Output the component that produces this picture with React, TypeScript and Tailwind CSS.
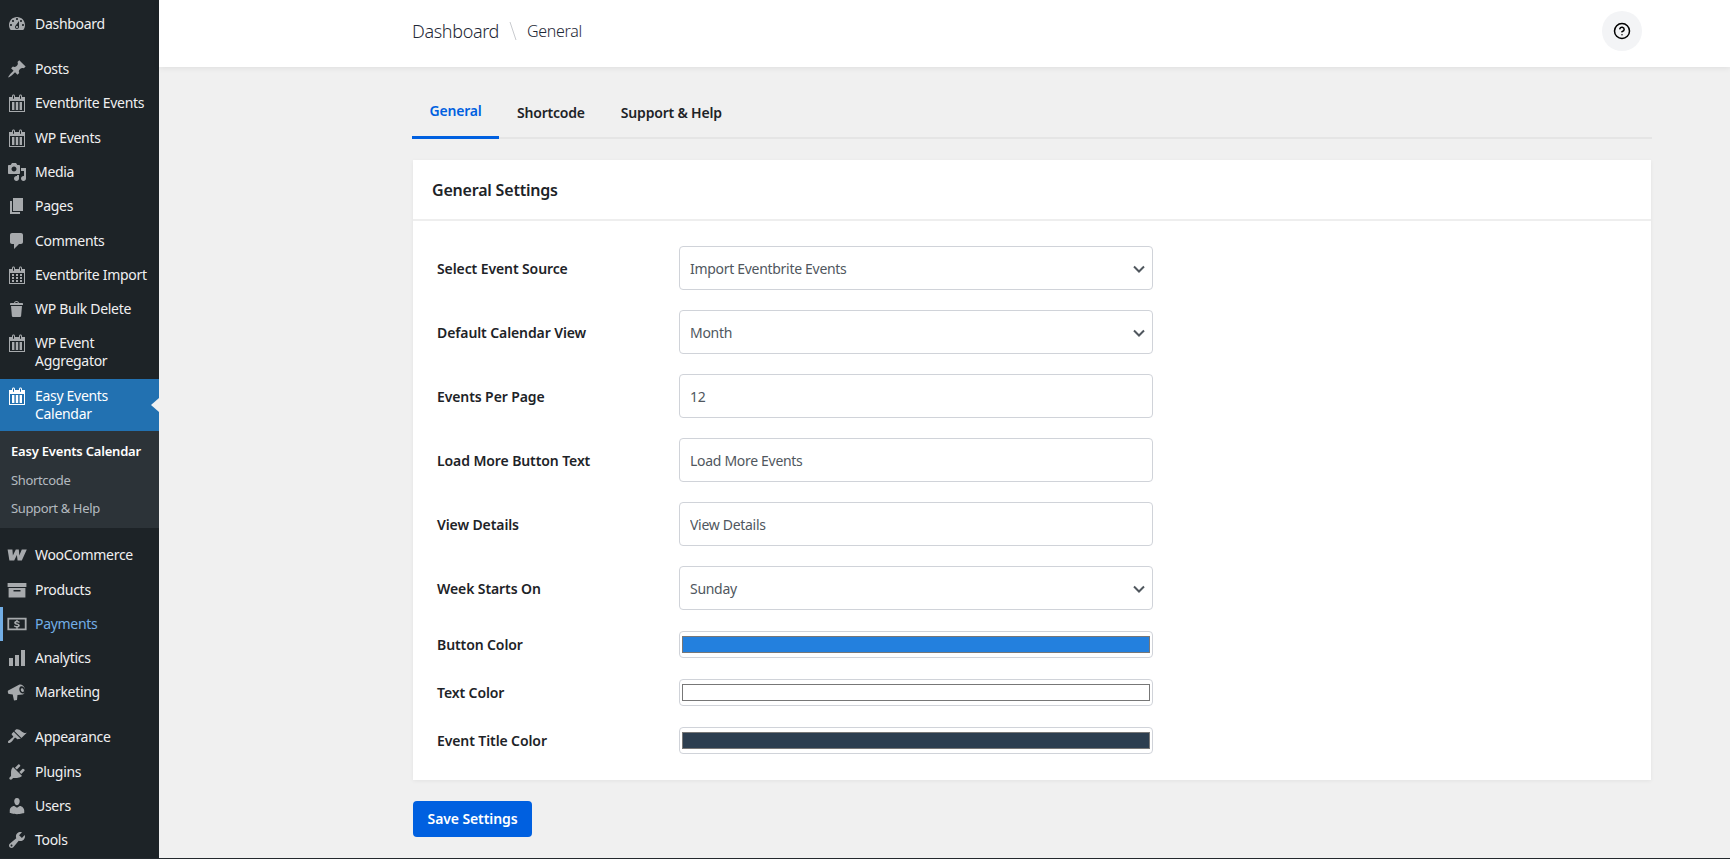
import React from "react";
import { CircleHelp } from "lucide-react";

const calTop =
  "M15 4h3v15H2V4h3V3c0-.41.15-.76.44-1.06.29-.29.65-.44 1.06-.44s.77.15 1.06.44c.29.3.44.65.44 1.06v1h4V3c0-.41.15-.76.44-1.06.29-.29.65-.44 1.06-.44s.77.15 1.06.44c.29.3.44.65.44 1.06v1zM6 3v2.5c0 .14.05.26.15.36.09.09.21.14.35.14s.26-.05.35-.14c.1-.1.15-.22.15-.36V3c0-.14-.05-.26-.15-.35-.09-.1-.21-.15-.35-.15s-.26.05-.35.15c-.1.09-.15.21-.15.35zm7 0v2.5c0 .14.05.26.14.36.1.09.22.14.36.14s.26-.05.36-.14c.09-.1.14-.22.14-.36V3c0-.14-.05-.26-.14-.35-.1-.1-.22-.15-.36-.15s-.26.05-.36.15c-.09.09-.14.21-.14.35zm4 15V8H3v10h14z";

const icons: Record<string, string> = {
  dashboard:
    "M3.76 16h12.48c1.1-1.37 1.76-3.11 1.76-5 0-4.42-3.58-8-8-8s-8 3.58-8 8c0 1.89.66 3.63 1.76 5zM10 4c.55 0 1 .45 1 1s-.45 1-1 1-1-.45-1-1 .45-1 1-1zM6 6c.55 0 1 .45 1 1s-.45 1-1 1-1-.45-1-1 .45-1 1-1zm8 0c.55 0 1 .45 1 1s-.45 1-1 1-1-.45-1-1 .45-1 1-1zm-5.37 5.55L12 7v6c0 1.1-.9 2-2 2s-2-.9-2-2c0-.57.24-1.08.63-1.45zM4 10c.55 0 1 .45 1 1s-.45 1-1 1-1-.45-1-1 .45-1 1-1zm12 0c.55 0 1 .45 1 1s-.45 1-1 1-1-.45-1-1 .45-1 1-1zm-5 3c0-.55-.45-1-1-1s-1 .45-1 1 .45 1 1 1 1-.45 1-1z",
  pin: "M10.44 3.02l1.82-1.82 6.36 6.35-1.83 1.82c-1.05-.68-2.48-.57-3.41.36l-.75.75c-.92.93-1.04 2.35-.35 3.41l-1.83 1.82-2.41-2.41-2.8 2.79c-.42.42-3.38 2.71-3.8 2.29s1.86-3.39 2.28-3.81l2.79-2.79L4.1 9.36l1.83-1.82c1.05.69 2.48.57 3.4-.36l.75-.75c.93-.92 1.05-2.35.36-3.41z",
  calendar: calTop + "M5 9h2.400v8H5zm3.800 0h2.400v8H8.800zm3.800 0H15v8h-2.400z",
  calendarGrid:
    calTop +
    "M7 9v2H5V9h2zm2 0h2v2H9V9zm4 2V9h2v2h-2zm-6 1v2H5v-2h2zm2 0h2v2H9v-2zm4 2v-2h2v2h-2zm-6 1v2H5v-2h2zm4 2H9v-2h2v2zm4 0h-2v-2h2v2z",
  media:
    "M13 11V4c0-.55-.45-1-1-1h-1.67L9 1H5L3.67 3H2c-.55 0-1 .45-1 1v7c0 .55.45 1 1 1h10c.55 0 1-.45 1-1zM7 4.5c1.38 0 2.5 1.12 2.5 2.5S8.38 9.5 7 9.5 4.5 8.38 4.5 7 5.62 4.5 7 4.5zM14 6h5v10.5c0 1.38-1.12 2.5-2.5 2.5S14 17.88 14 16.5s1.12-2.5 2.5-2.5c.17 0 .34.02.5.05V9h-3V6zm-4 8.05V13h2v3.5c0 1.38-1.12 2.5-2.5 2.5S7 17.88 7 16.5 8.12 14 9.5 14c.17 0 .34.02.5.05z",
  page: "M6 15V2h10v13H6zm-1 1h8v2H3V5h2v11z",
  comments: "M5 2h9c1.1 0 2 .9 2 2v7c0 1.1-.9 2-2 2h-2l-5 5v-5H5c-1.1 0-2-.9-2-2V4c0-1.1.9-2 2-2z",
  trash:
    "M12 4h3c.6 0 1 .4 1 1v1H3V5c0-.6.5-1 1-1h3c.2-1.1 1.3-2 2.5-2s2.3.9 2.5 2zM8 4h3c-.2-.6-.9-1-1.5-1S8.2 3.4 8 4zM4 7h11l-.9 10.1c0 .5-.5.9-1 .9H5.9c-.5 0-.9-.4-1-.9L4 7z",
  woo: "M.6 4.400h4.800l.5 6.200 2.900-6.200h3l.5 6.200 2.500-6.200h5l-5 11h-4.200l-.7-5.400-2.700 5.400H2.400z",
  archive: "M19.400 3v4H.6V3h18.800zM1.600 8h16.800v9.400H1.600V8zm4.900 2v1.400h7V10h-7z",
  payments:
    "M.4 3.800h19.200v12.400H.4V3.800zm1.800 1.800v8.800h15.600V5.600H2.200zM9.300 6h1.400v1c.9.1 1.600.4 2.100.9l-.7 1.100c-.5-.4-1.200-.8-2-.8-.8 0-1.100.3-1.100.6 0 .4.5.5 1.300.7 1.400.3 2.500.8 2.500 2 0 1-.8 1.700-2.100 1.900v1H9.300v-1c-1.100-.1-1.900-.5-2.500-1.100l.8-1.100c.6.5 1.400.9 2.300.9.8 0 1.100-.2 1.100-.6s-.4-.6-1.400-.8c-1.400-.3-2.400-.8-2.400-2 0-1 .8-1.700 2.100-1.900v-.8z",
  analytics: "M18 18V2h-4v16h4zm-6 0V7H8v11h4zm-6 0v-8H2v8h4z",
  marketing:
    "M1.200 8.400L12 2.800c2-1 4.600.4 5.600 3.200 1 2.900.1 5.800-1.900 6.500L10.500 13 10 18 7 18.600 5.700 12.400 2.300 12.100c-1.200-.1-2-3.100-1.100-3.700zM14 4.300c-1.500.5-2.100 2.400-1.500 4.400.7 2 2.400 3.200 3.900 2.700 1.500-.5 2.100-2.400 1.400-4.400-.6-2-2.300-3.200-3.800-2.700zM14.700 6.300c.8-.3 1.700.4 2 1.400.4 1 .1 2-.7 2.300-.8.3-1.700-.4-2-1.400-.4-1-.1-2 .7-2.300z",
  brush:
    "M14.480 11.060L7.410 3.990l1.500-1.500c.5-.56 2.300-.47 3.510.32 1.210.8 1.430 1.280 2.910 2.100 1.180.64 2.450 1.260 4.450.85zm-.71.71L6.700 4.700 4.930 6.470c-.39.39-.39 1.020 0 1.410l1.060 1.060c.39.39.39 1.030 0 1.420-.6.6-1.430 1.110-2.210 1.690-.35.26-.7.53-1.010.84C1.430 13.230.4 14.930 1.200 15.730c.8.79 2.500-.24 3.840-1.570.31-.31.58-.66.84-1.020.58-.78 1.090-1.610 1.690-2.210.39-.39 1.020-.39 1.410 0l1.060 1.060c.39.39 1.020.39 1.410 0z",
  plugin:
    "M13.110 4.360L9.870 7.600 8 5.730l3.240-3.240c.35-.34 1.050-.2 1.560.32.52.51.66 1.210.31 1.550zm-8 1.770l.91-1.120 9.010 9.010-1.190.84c-.71.71-2.630 1.160-3.820 1.160H6.140L4.900 17.260c-.59.59-1.540.59-2.120 0-.59-.58-.59-1.530 0-2.120l1.240-1.240v-3.880c0-1.130.4-3.190 1.090-3.890zm7.260 3.970l3.240-3.240c.34-.35 1.040-.21 1.550.31.52.51.66 1.210.31 1.550l-3.240 3.250z",
  users:
    "M10 9.250c-2.270 0-2.730-3.440-2.730-3.440C7 4.020 7.820 2 9.970 2c2.160 0 2.980 2.020 2.710 3.810 0 0-.41 3.440-2.680 3.440zm0 2.570L12.720 10c2.390 0 4.520 2.330 4.520 4.530v2.490s-3.650 1.130-7.240 1.130c-3.650 0-7.240-1.130-7.240-1.130v-2.490c0-2.250 1.940-4.480 4.470-4.480z",
  tools:
    "M16.680 9.770c-1.340 1.340-3.300 1.670-4.950.99l-5.410 6.520c-.99.99-2.590.99-3.580 0s-.99-2.590 0-3.570l6.520-5.420c-.68-1.650-.35-3.610.99-4.950 1.280-1.280 3.120-1.620 4.720-1.060l-2.890 2.890 2.820 2.820 2.860-2.870c.53 1.580.18 3.390-1.080 4.650zM3.810 16.210c.4.39 1.040.39 1.430 0 .4-.4.4-1.040 0-1.430-.39-.4-1.030-.4-1.430 0-.39.39-.39 1.030 0 1.430z",
};

function MenuIcon({ name, className }: { name: string; className?: string }) {
  return (
    <svg viewBox="0 0 20 20" className={`-my-px h-5 w-5 shrink-0 fill-current ${className ?? ""}`}>
      <path fillRule="evenodd" d={icons[name]} />
    </svg>
  );
}

type Item = { label: string; icon: string; gap?: boolean };

const topItems: Item[] = [
  { label: "Dashboard", icon: "dashboard" },
  { label: "Posts", icon: "pin", gap: true },
  { label: "Eventbrite Events", icon: "calendar" },
  { label: "WP Events", icon: "calendar" },
  { label: "Media", icon: "media" },
  { label: "Pages", icon: "page" },
  { label: "Comments", icon: "comments" },
  { label: "Eventbrite Import", icon: "calendarGrid" },
  { label: "WP Bulk Delete", icon: "trash" },
  { label: "WP Event Aggregator", icon: "calendar" },
];

const bottomItems: Item[] = [
  { label: "WooCommerce", icon: "woo", gap: true },
  { label: "Products", icon: "archive" },
  { label: "Payments", icon: "payments" },
  { label: "Analytics", icon: "analytics" },
  { label: "Marketing", icon: "marketing" },
  { label: "Appearance", icon: "brush", gap: true },
  { label: "Plugins", icon: "plugin" },
  { label: "Users", icon: "users" },
  { label: "Tools", icon: "tools" },
];

function MenuRow({ item }: { item: Item }) {
  const isPayments = item.label === "Payments";
  return (
    <div
      className={`flex items-start gap-2 py-[8.15px] leading-[18px] ${item.gap ? "mt-[10.7px]" : ""} ${
        isPayments ? "border-l-[3px] border-[#72aee6] pl-[4px] text-[#72aee6]" : "pl-[7px] text-[#f0f0f1]"
      }`}
    >
      <MenuIcon name={item.icon} className="text-[#a7aaad]" />
      <span>{item.label}</span>
    </div>
  );
}

function Sidebar() {
  return (
    <aside className="w-[159px] shrink-0 bg-[#1d2327] pt-[7px] text-[14px] tracking-[-0.3px]">
      {topItems.map((item) => (
        <MenuRow key={item.label} item={item} />
      ))}
      <div className="relative flex items-start gap-2 bg-[#2271b1] py-[8px] pl-[7px] pr-4 leading-[18px] text-white">
        <MenuIcon name="calendar" className="text-white" />
        <span>Easy Events Calendar</span>
        <div className="absolute right-0 top-[19px] border-y-[7px] border-r-[8px] border-y-transparent border-r-[#f0f0f0]" />
      </div>
      <div className="bg-[#2c3338] pb-[11px] pl-[11px] pt-[11px] text-[13px] leading-[18px]">
        <div className="h-[29px] font-semibold tracking-[-0.2px] text-white">Easy Events Calendar</div>
        <div className="h-[28px] tracking-[-0.35px] text-[#f0f6fcb3]">Shortcode</div>
        <div className="h-[18px] tracking-[-0.35px] text-[#f0f6fcb3]">Support &amp; Help</div>
      </div>
      {bottomItems.map((item) => (
        <MenuRow key={item.label} item={item} />
      ))}
    </aside>
  );
}

function Row({ label, children }: { label: string; children: React.ReactNode }) {
  return (
    <div className="flex items-center">
      <label className="w-[242px] shrink-0 text-[14px] font-semibold tracking-[-0.1px] text-[#1d2327]">{label}</label>
      <div className="relative w-[474px]">{children}</div>
    </div>
  );
}

const fieldClass =
  "block h-[44px] w-full rounded-[4px] border border-[#d0d3d9] bg-white px-[10px] text-[14px] tracking-[-0.3px] text-[#50575e] outline-none";

function SelectField({ value }: { value: string }) {
  return (
    <>
      <select defaultValue={value} className={`${fieldClass} appearance-none`}>
        <option>{value}</option>
      </select>
      <svg
        viewBox="0 0 12 8"
        className="pointer-events-none absolute right-[8px] top-[19px] h-2 w-3 fill-none stroke-[#50575e] stroke-2"
      >
        <path d="M1 1.500l5 5 5-5" />
      </svg>
    </>
  );
}

function ColorField({ value }: { value: string }) {
  return (
    <input
      type="color"
      defaultValue={value}
      className="block h-[27px] w-full rounded-[4px] border border-[#d0d3d9] bg-white p-0"
    />
  );
}

export default function App() {
  return (
    <div className="flex h-[859px] w-[1730px] flex-col overflow-hidden bg-[#f0f0f0] font-['Noto_Sans',sans-serif]">
      <div className="flex min-h-0 flex-1">
        <Sidebar />
        <main className="min-w-0 flex-1">
          <header className="flex h-[67px] items-center justify-between bg-white pb-[5px] pl-[253px] pr-[88px] shadow-[0_1px_6px_rgba(0,0,0,0.08)]">
            <div className="flex items-center font-light text-[#1f2937]">
              <span className="text-[18px] tracking-[-0.35px]">Dashboard</span>
              <svg viewBox="0 0 8 20" className="mx-[10px] h-5 w-2 stroke-[#c9cbcf]">
                <path d="M1 1l6 18" />
              </svg>
              <span className="text-[16px] tracking-[-0.3px]">General</span>
            </div>
            <div className="flex h-10 w-10 items-center justify-center rounded-full bg-[#f3f4f6]">
              <CircleHelp className="h-[18px] w-[18px] text-black" />
            </div>
          </header>

          <div className="pl-[253px] pr-[78px]">
            <nav className="mt-[17px] flex h-[55px] items-start border-b-2 border-[#e5e5e5] text-[14px] font-semibold tracking-[-0.2px]">
              <div className="flex h-[55px] w-[87px] items-center justify-center border-b-[3px] border-[#0060e0] text-[#0060e0]">
                General
              </div>
              <div className="flex h-[53px] items-center px-[18px] pt-[3px] text-[#1d2327]">Shortcode</div>
              <div className="flex h-[53px] items-center px-[18px] pt-[3px] text-[#1d2327]">Support &amp; Help</div>
            </nav>

            <section className="ml-px mr-px mt-[21px] bg-white shadow-[0_1px_4px_rgba(0,0,0,0.06)]">
              <div className="flex h-[61px] items-center border-b-2 border-[#eeeeee] pl-[19px] text-[16px] font-semibold tracking-[-0.2px] text-[#1d2327]">
                General Settings
              </div>
              <div className="pb-[26px] pl-[24px] pt-[25px]">
                <div className="flex flex-col gap-5">
                  <Row label="Select Event Source">
                    <SelectField value="Import Eventbrite Events" />
                  </Row>
                  <Row label="Default Calendar View">
                    <SelectField value="Month" />
                  </Row>
                  <Row label="Events Per Page">
                    <input defaultValue="12" type="number" className={fieldClass} />
                  </Row>
                  <Row label="Load More Button Text">
                    <input defaultValue="Load More Events" className={fieldClass} />
                  </Row>
                  <Row label="View Details">
                    <input defaultValue="View Details" className={fieldClass} />
                  </Row>
                  <Row label="Week Starts On">
                    <SelectField value="Sunday" />
                  </Row>
                </div>
                <div className="mt-[21px] flex flex-col gap-[21px]">
                  <Row label="Button Color">
                    <ColorField value="#2380de" />
                  </Row>
                  <Row label="Text Color">
                    <ColorField value="#ffffff" />
                  </Row>
                  <Row label="Event Title Color">
                    <ColorField value="#2c3e50" />
                  </Row>
                </div>
              </div>
            </section>

            <button className="ml-px mt-[21px] h-9 w-[119px] rounded-[4px] bg-[#0060e0] pb-px text-[14px] font-semibold tracking-[-0.1px] text-white">
              Save Settings
            </button>
          </div>
        </main>
      </div>
      <div className="h-px shrink-0 bg-[#23282d]" />
    </div>
  );
}
